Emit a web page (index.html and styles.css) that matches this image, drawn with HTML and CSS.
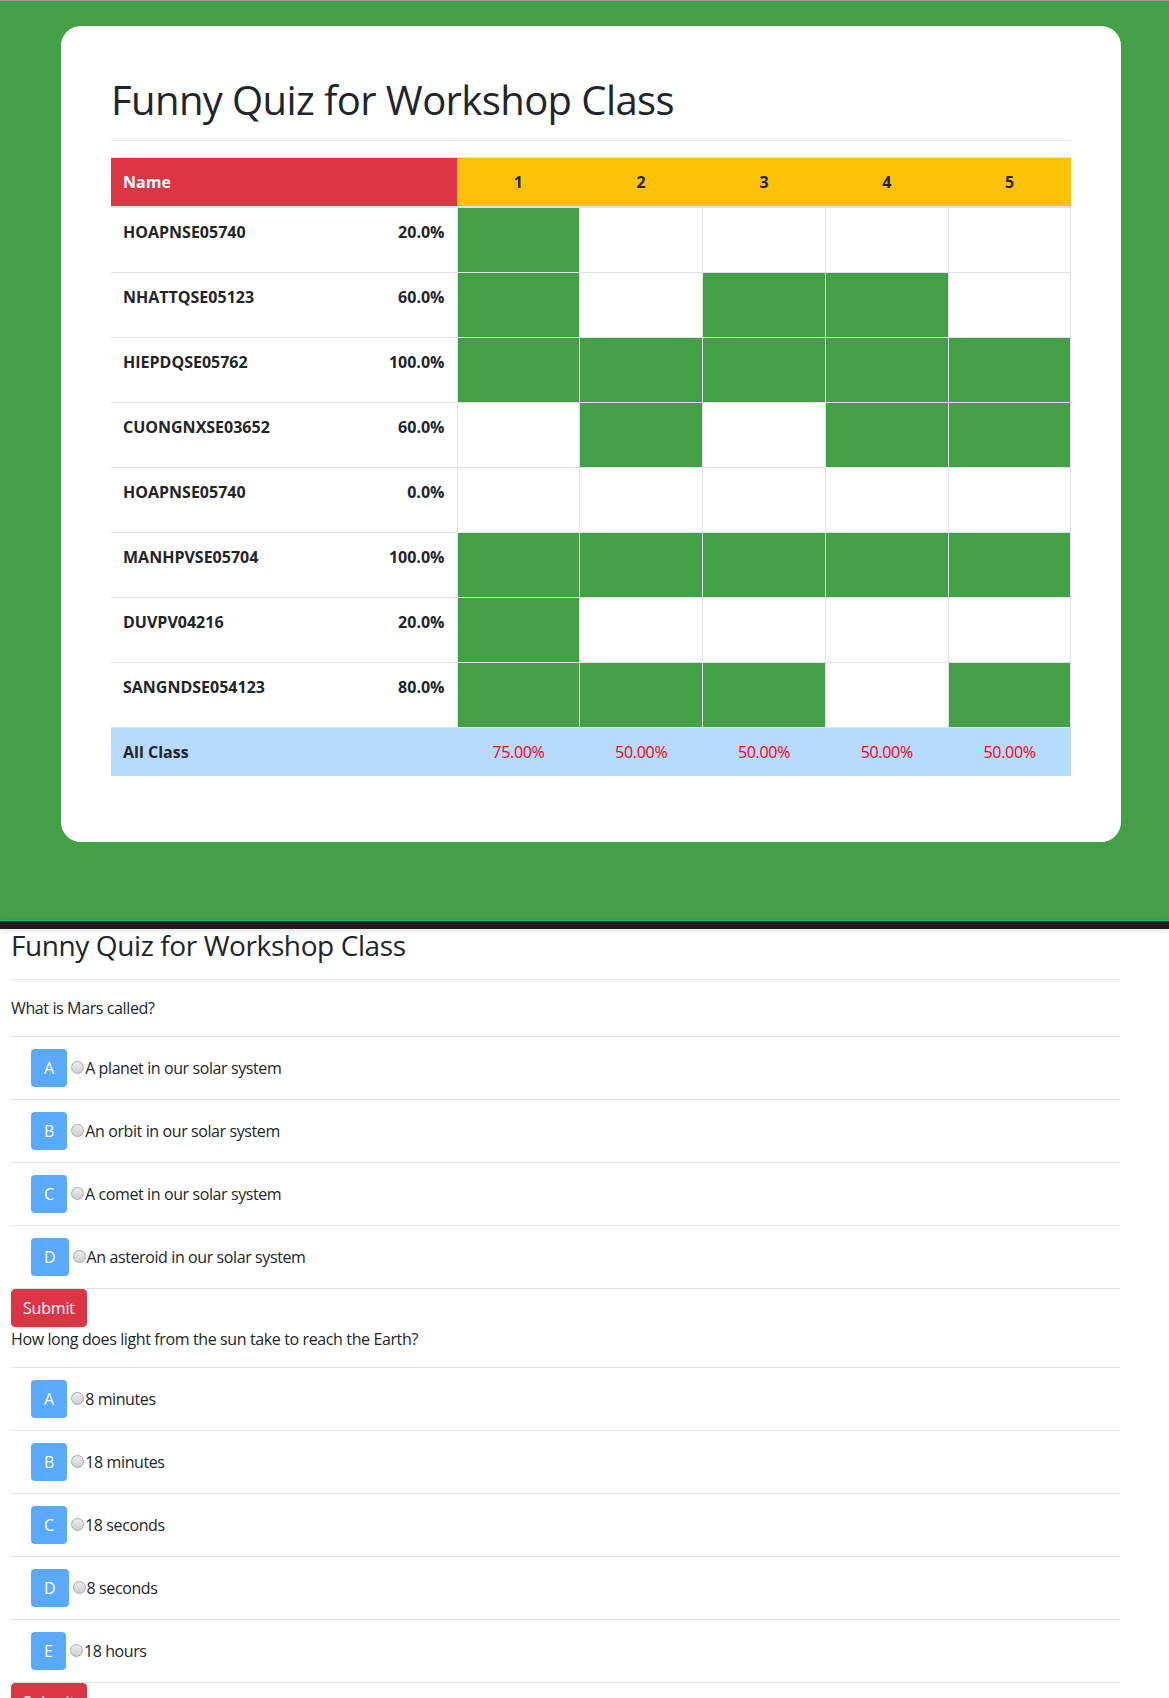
FILE: index.html
```html
<!DOCTYPE html>
<html lang="en">
<head>
<meta charset="utf-8">
<title>Funny Quiz for Workshop Class</title>
<link rel="stylesheet" href="styles.css">
</head>
<body>
<section class="hero">
  <div class="card">
    <h1 class="title">Funny Quiz for Workshop Class</h1>
    <hr class="rule">
    <table class="grid">
      <colgroup>
        <col class="c-name"><col class="c-pct"><col class="c-q"><col class="c-q"><col class="c-q"><col class="c-q"><col class="c-q">
      </colgroup>
      <thead>
        <tr><th class="h-name" colspan="2">Name</th><th class="h-q">1</th><th class="h-q">2</th><th class="h-q">3</th><th class="h-q">4</th><th class="h-q">5</th></tr>
      </thead>
      <tbody>
        <tr><td class="nm">HOAPNSE05740</td><td class="pc">20.0%</td><td class="q on"><div class="box"></div></td><td class="q"><div class="box"></div></td><td class="q"><div class="box"></div></td><td class="q"><div class="box"></div></td><td class="q"><div class="box"></div></td></tr>
        <tr><td class="nm">NHATTQSE05123</td><td class="pc">60.0%</td><td class="q on"><div class="box"></div></td><td class="q"><div class="box"></div></td><td class="q on"><div class="box"></div></td><td class="q on"><div class="box"></div></td><td class="q"><div class="box"></div></td></tr>
        <tr><td class="nm">HIEPDQSE05762</td><td class="pc">100.0%</td><td class="q on"><div class="box"></div></td><td class="q on"><div class="box"></div></td><td class="q on"><div class="box"></div></td><td class="q on"><div class="box"></div></td><td class="q on"><div class="box"></div></td></tr>
        <tr><td class="nm">CUONGNXSE03652</td><td class="pc">60.0%</td><td class="q"><div class="box"></div></td><td class="q on"><div class="box"></div></td><td class="q"><div class="box"></div></td><td class="q on"><div class="box"></div></td><td class="q on"><div class="box"></div></td></tr>
        <tr><td class="nm">HOAPNSE05740</td><td class="pc">0.0%</td><td class="q"><div class="box"></div></td><td class="q"><div class="box"></div></td><td class="q"><div class="box"></div></td><td class="q"><div class="box"></div></td><td class="q"><div class="box"></div></td></tr>
        <tr><td class="nm">MANHPVSE05704</td><td class="pc">100.0%</td><td class="q on"><div class="box"></div></td><td class="q on"><div class="box"></div></td><td class="q on"><div class="box"></div></td><td class="q on"><div class="box"></div></td><td class="q on"><div class="box"></div></td></tr>
        <tr><td class="nm">DUVPV04216</td><td class="pc">20.0%</td><td class="q on"><div class="box"></div></td><td class="q"><div class="box"></div></td><td class="q"><div class="box"></div></td><td class="q"><div class="box"></div></td><td class="q"><div class="box"></div></td></tr>
        <tr><td class="nm">SANGNDSE054123</td><td class="pc">80.0%</td><td class="q on"><div class="box"></div></td><td class="q on"><div class="box"></div></td><td class="q on"><div class="box"></div></td><td class="q"><div class="box"></div></td><td class="q on"><div class="box"></div></td></tr>
        <tr class="sum"><td class="nm" colspan="2">All Class</td><td class="avg">75.00%</td><td class="avg">50.00%</td><td class="avg">50.00%</td><td class="avg">50.00%</td><td class="avg">50.00%</td></tr>
      </tbody>
    </table>
  </div>
</section>
<div class="bar"></div>
<main class="quiz">
  <h3 class="quiz-title">Funny Quiz for Workshop Class</h3>
  <hr class="rule">
  <p class="question">What is Mars called?</p>
  <ul class="answers">
    <li class="answer"><span class="letter">A</span><span class="radio"></span>A planet in our solar system</li>
    <li class="answer"><span class="letter">B</span><span class="radio"></span>An orbit in our solar system</li>
    <li class="answer"><span class="letter">C</span><span class="radio"></span>A comet in our solar system</li>
    <li class="answer"><span class="letter">D</span><span class="radio"></span>An asteroid in our solar system</li>
  </ul>
  <button class="submit" type="button">Submit</button>
  <p class="question">How long does light from the sun take to reach the Earth?</p>
  <ul class="answers">
    <li class="answer"><span class="letter">A</span><span class="radio"></span>8 minutes</li>
    <li class="answer"><span class="letter">B</span><span class="radio"></span>18 minutes</li>
    <li class="answer"><span class="letter">C</span><span class="radio"></span>18 seconds</li>
    <li class="answer"><span class="letter">D</span><span class="radio"></span>8 seconds</li>
    <li class="answer"><span class="letter">E</span><span class="radio"></span>18 hours</li>
  </ul>
  <button class="submit" type="button">Submit</button>
</main>
</body>
</html>
```
FILE: styles.css
```css
body {
  margin: 0;
  font-family: "Open Sans", "Noto Sans", "Liberation Sans", sans-serif;
  font-size: 16px;
  line-height: 1.5;
  color: #212529;
  background: #fff;
}

.hero {
  background: #43a047;
  border-top: 1px solid #9e9e9e;
  padding: 25px 48px 78px 61px;
}

.card {
  background: #fff;
  border-radius: 20px;
  padding: 50px;
}

.title {
  font-size: 40px;
  font-weight: 500;
  line-height: 1.2;
  margin: 0 0 8px;
  letter-spacing: -0.6px;
}

.rule {
  border: 0;
  border-top: 1px solid rgba(0, 0, 0, 0.1);
  margin: 16px 0;
}

.grid {
  width: 100%;
  border-collapse: collapse;
  table-layout: fixed;
  margin-bottom: 16px;
}

.c-name { width: 246px; }
.c-pct { width: 100px; }
.c-q { width: 122.8px; }

.grid th {
  padding: 12px;
  border-top: 1px solid #dee2e6;
  border-bottom: 2px solid #dee2e6;
  font-weight: 700;
  line-height: 24px;
}

.h-name {
  background: #dc3545;
  color: #fff;
  text-align: left;
}

.h-q {
  background: #ffc107;
  color: #212529;
  text-align: center;
}

.grid td {
  border-top: 1px solid #dee2e6;
  vertical-align: top;
}

.nm {
  padding: 12px;
  font-weight: 700;
  text-align: left;
}

.pc {
  padding: 12px;
  font-weight: 700;
  text-align: right;
}

.q {
  padding: 0;
  border: 1px solid #dee2e6;
}

.q.on { background: #43a047; }

.box { height: 64px; }

.sum td {
  background: #b8daff;
  padding: 12px;
}

.avg {
  text-align: center;
  color: #ff0000;
  font-weight: 400;
  letter-spacing: -0.3px;
}

.bar {
  height: 8px;
  background: #1e1e1e;
  border-top: 1px solid #2bb38a;
  box-shadow: 0 2px 6px rgba(0, 0, 0, 0.12);
}

.quiz {
  padding: 0 49px 0 11px;
}

.quiz-title {
  font-size: 28px;
  font-weight: 500;
  line-height: 1.2;
  margin: 0 0 8px;
  letter-spacing: -0.4px;
}

.question {
  margin: 0 0 16px;
  letter-spacing: -0.38px;
}

.answers {
  list-style: none;
  margin: 0;
  padding: 0;
}

.answer {
  padding: 12px 20px;
  border-top: 1px solid #dee2e6;
  letter-spacing: -0.4px;
}

.answer:last-child {
  border-bottom: 1px solid #dee2e6;
}

.letter {
  display: inline-block;
  padding: 6px 12px;
  border: 1px solid transparent;
  border-radius: 4px;
  background: #59a9ff;
  color: #fff;
  line-height: 24px;
  text-align: center;
  letter-spacing: 0;
}

.radio {
  display: inline-block;
  width: 11px;
  height: 11px;
  border: 1px solid #a9a9a9;
  border-radius: 50%;
  background: linear-gradient(#ececec, #cfcfcf);
  margin: 0 1px 0 4px;
}

.submit {
  display: block;
  font-family: inherit;
  font-size: 16px;
  line-height: 24px;
  padding: 6px 11px;
  border: 1px solid #dc3545;
  border-radius: 4px;
  background: #dc3545;
  color: #fff;
  cursor: pointer;
  letter-spacing: -0.2px;
}
```
